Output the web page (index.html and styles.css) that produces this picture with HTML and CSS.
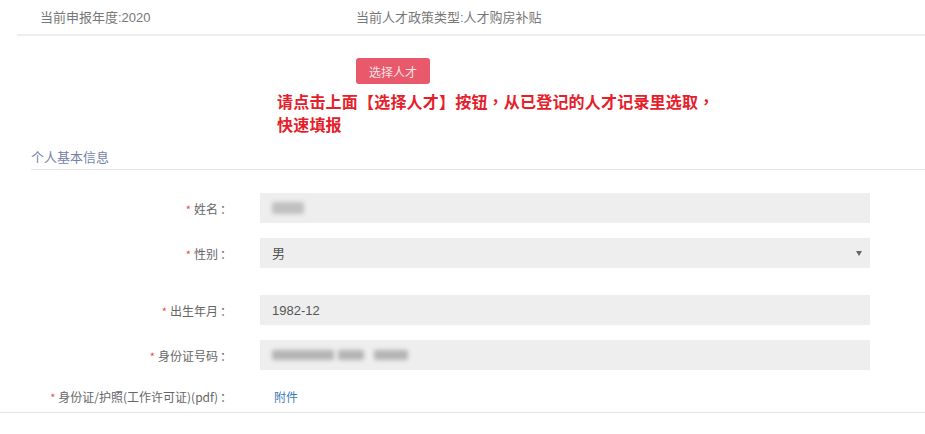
FILE: index.html
```html
<!DOCTYPE html>
<html lang="zh-CN">
<head>
<meta charset="utf-8">
<link rel="stylesheet" href="styles.css">
</head>
<body>
<div class="page">
  <div class="header">
    <div class="year">当前申报年度:2020</div>
    <div class="policy">当前人才政策类型:人才购房补贴</div>
  </div>
  <div class="pick">
    <button class="btn-pick">选择人才</button>
    <div class="tip">请点击上面【选择人才】按钮<span class="punct" lang="zh-TW">，</span>从已登记的人才记录里选取<span class="punct" lang="zh-TW">，</span><br>快速填报</div>
  </div>
  <div class="section-title">个人基本信息</div>
  <div class="form">
    <div class="row r-name">
      <div class="label"><span class="req">*</span>姓名<span class="colon">：</span></div>
      <div class="field"><span class="blur blur-name"></span></div>
    </div>
    <div class="row r-sex">
      <div class="label"><span class="req">*</span>性别<span class="colon">：</span></div>
      <div class="field select"><span class="val">男</span><span class="arrow"></span></div>
    </div>
    <div class="row r-birth">
      <div class="label"><span class="req">*</span>出生年月<span class="colon">：</span></div>
      <div class="field"><span class="val">1982-12</span></div>
    </div>
    <div class="row r-id">
      <div class="label"><span class="req">*</span>身份证号码<span class="colon">：</span></div>
      <div class="field"><span class="blur b1"></span><span class="blur b2"></span><span class="blur b3"></span></div>
    </div>
    <div class="row r-file">
      <div class="label"><span class="req">*</span>身份证/护照(工作许可证)(pdf)<span class="colon">：</span></div>
      <div class="link">附件</div>
    </div>
  </div>
</div>
</body>
</html>
```

FILE: styles.css
```css
* { box-sizing: border-box; }
html, body { margin: 0; padding: 0; background: #fff; }
body {
  font-family: "Liberation Sans", "Noto Sans CJK SC", sans-serif;
  color: #666;
  width: 925px;
  height: 434px;
  overflow: hidden;
}
.page { position: relative; }

.header {
  display: flex;
  align-items: center;
  height: 36px;
  margin-left: 17px;
  padding-left: 23px;
  padding-bottom: 2px;
  border-bottom: 2px solid #eeeeee;
  font-size: 13px;
  color: #777;
}
.year { width: 316px; }

.pick {
  padding-left: 277px;
  padding-top: 22px;
}
.btn-pick {
  display: block;
  margin-left: 79px;
  width: 74px;
  height: 26px;
  border: 0;
  border-radius: 3px;
  background: #e8596c;
  color: #fbe3e6;
  font-family: "Noto Sans CJK SC", sans-serif;
  font-size: 12px;
  padding: 0;
}
.tip {
  margin-top: 6px;
  font-family: "Noto Sans CJK SC", sans-serif;
  font-weight: bold;
  font-size: 16px;
  line-height: 23px;
  letter-spacing: 0.2px;
  color: #e5202a;
  white-space: nowrap;
}
.punct { font-family: "Noto Sans CJK TC", sans-serif; }

.section-title {
  margin-left: 31px;
  margin-top: 11px;
  padding-bottom: 2px;
  border-bottom: 1px solid #e6e6e6;
  font-family: "Noto Sans CJK SC", sans-serif;
  font-size: 13px;
  line-height: 20px;
  color: #7381a9;
}

.form {
  padding-top: 23px;
  border-bottom: 1px solid #e4e4e4;
  padding-bottom: 1px;
}
.row {
  display: grid;
  grid-template-columns: 232px 610px;
  column-gap: 28px;
  align-items: center;
}
.r-sex { margin-top: 15px; }
.r-birth { margin-top: 27px; }
.r-id { margin-top: 15px; }
.r-file { margin-top: 11px; height: 30px; }

.label {
  text-align: right;
  font-family: "Noto Sans CJK SC", sans-serif;
  font-size: 12px;
  color: #666;
  white-space: nowrap;
}
.req { color: #e84a4a; margin-right: 3px; font-size: 11px; }
.colon { margin-left: 2px; }

.field {
  position: relative;
  height: 30px;
  background: #eeeeee;
  display: flex;
  align-items: center;
  padding-left: 12px;
  font-family: "Liberation Sans", "Noto Sans CJK SC", sans-serif;
  font-size: 13px;
  color: #555;
}
.field .val { line-height: 1; }
.select .arrow {
  position: absolute;
  right: 8px;
  top: 13px;
  width: 0;
  height: 0;
  border-left: 3px solid transparent;
  border-right: 3px solid transparent;
  border-top: 5px solid #666;
}

.blur {
  display: inline-block;
  height: 10px;
  background: #b4b4b4;
  filter: blur(2px);
  border-radius: 2px;
}
.blur-name { width: 32px; height: 12px; background: #c0c0c0; }
.b1 { width: 62px; }
.b2 { width: 26px; margin-left: 4px; }
.b3 { width: 34px; margin-left: 10px; }

.link {
  padding-left: 14px;
  font-family: "Noto Sans CJK SC", sans-serif;
  font-size: 12px;
  color: #3d79b9;
}
```
